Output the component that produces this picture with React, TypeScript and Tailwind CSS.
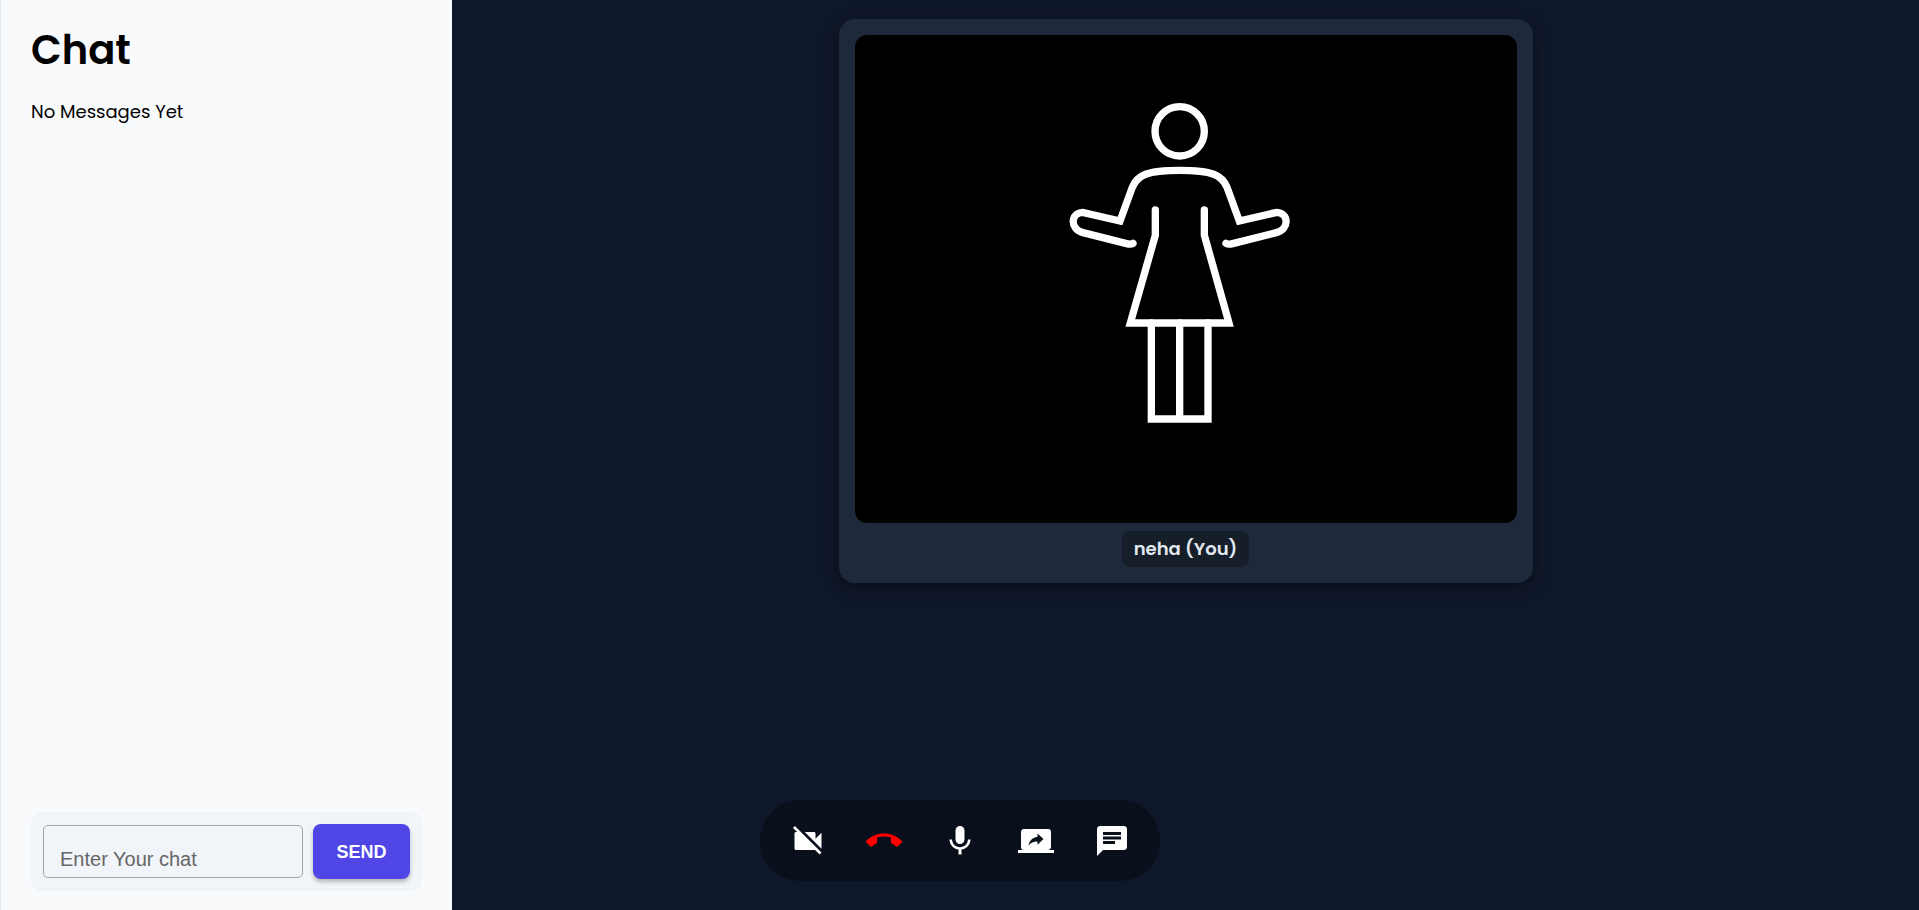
import { useState } from "react";
import type { ReactNode } from "react";
import { MdCallEnd, MdChat, MdMic, MdScreenShare, MdVideocamOff } from "react-icons/md";

function Figure() {
  return (
    <svg
      viewBox="-585 -135 1986 1464"
      className="block w-full rounded-xl bg-black"
      fill="none"
      stroke="#fff"
      strokeWidth={22}
      strokeLinecap="round"
      strokeMiterlimit={10}
      role="img"
      aria-label="Camera feed"
    >
      <circle cx={389} cy={154} r={74} />
      <path d="M249 490Q243 494 230 491L99 458C60 448 60 400 98 397L210 423L247 322C262 285 291 271 389 271C487 271 516 285 531 322L568 423L680 397C718 400 718 448 679 458L548 491Q535 494 528 490" />
      <path d="M316 390V466L241 729H537L463 466V390" />
      <path d="M304 729V1017H474V729M389 729V1017" />
    </svg>
  );
}

function ControlButton({ label, children, danger = false }: { label: string; children: ReactNode; danger?: boolean }) {
  return (
    <button
      type="button"
      aria-label={label}
      className={danger ? "p-5 text-4xl text-[#ff0000]" : "p-5 text-4xl text-white"}
    >
      {children}
    </button>
  );
}

function ChatPanel() {
  const [message, setMessage] = useState("");
  return (
    <aside className="flex w-[452px] shrink-0 flex-col border-l border-slate-200 bg-[#f9fafc] px-[30px] pt-5 pb-[19px] text-black">
      <h1 className="text-[40px] leading-[60px] font-semibold">Chat</h1>
      <p className="mt-5 text-lg leading-6">No Messages Yet</p>
      <form
        className="mt-auto flex items-center gap-[10px] rounded-[10px] bg-[#f1f4f9] p-3"
        onSubmit={(event) => event.preventDefault()}
      >
        <input
          type="text"
          aria-label="Enter Your chat"
          placeholder="Enter Your chat"
          value={message}
          onChange={(event) => setMessage(event.target.value)}
          className="h-[53px] min-w-0 flex-1 rounded-[5px] border border-[#a1a4a9] bg-transparent px-4 pt-4 font-['Liberation_Sans',Arial,sans-serif] text-xl text-black placeholder:text-[#666]"
        />
        <button
          type="submit"
          className="h-[55px] w-[97px] rounded-lg bg-[#4f46e5] font-['Liberation_Sans',Arial,sans-serif] text-lg font-bold text-white shadow-[0_3px_4px_rgba(0,0,0,0.25)]"
        >
          SEND
        </button>
      </form>
    </aside>
  );
}

export default function App() {
  return (
    <div className="relative flex min-h-screen bg-[#0f172a] font-[Poppins,Inter,sans-serif]">
      <ChatPanel />
      <main className="flex flex-1 items-start justify-center px-5 pt-[19px]">
        <figure className="flex w-full max-w-[694px] flex-col items-center gap-2 rounded-2xl bg-[#1e293b] p-4 shadow-[0_4px_16px_rgba(0,0,0,0.4)]">
          <Figure />
          <figcaption className="rounded-lg bg-[#161e2a] px-3 text-lg leading-9 font-semibold text-slate-200">
            neha (You)
          </figcaption>
        </figure>
      </main>
      <nav
        aria-label="Call controls"
        className="absolute bottom-[29px] left-1/2 flex h-[81px] w-[400px] -translate-x-1/2 items-center justify-center rounded-[40px] bg-[#0a0f1c]"
      >
        <ControlButton label="Turn camera on">
          <MdVideocamOff />
        </ControlButton>
        <ControlButton label="End call" danger>
          <MdCallEnd />
        </ControlButton>
        <ControlButton label="Mute microphone">
          <MdMic />
        </ControlButton>
        <ControlButton label="Share screen">
          <MdScreenShare />
        </ControlButton>
        <ControlButton label="Toggle chat">
          <MdChat />
        </ControlButton>
      </nav>
    </div>
  );
}
